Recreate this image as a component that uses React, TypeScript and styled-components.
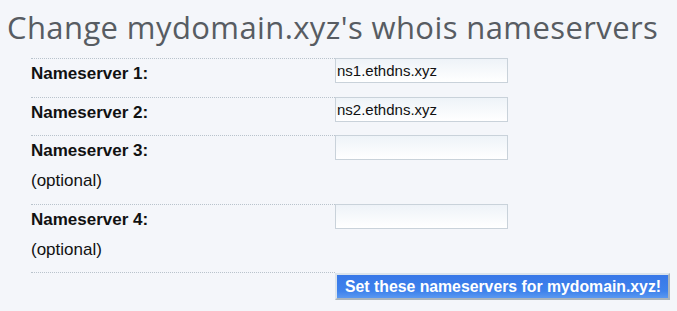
import React from "react";
import styled, { createGlobalStyle } from "styled-components";

const Global = createGlobalStyle`
  html, body { margin: 0; padding: 0; background: #f4f6fa; }
  body { font-family: "Liberation Sans", Arial, sans-serif; color: #111; }
`;

const Page = styled.div`
  padding: 8px 0 0 7px;
  width: 677px;
  height: 311px;
  box-sizing: border-box;
  overflow: hidden;
`;

const Title = styled.h1`
  margin: 0;
  font-family: "Open Sans", sans-serif;
  font-weight: 400;
  font-size: 31px;
  line-height: 38px;
  letter-spacing: 0.4px;
  color: #575c62;
  white-space: nowrap;
`;

const Form = styled.form`
  margin: 12px 0 0 24px;
  display: flex;
  flex-direction: column;
`;

const Row = styled.div`
  display: flex;
  align-items: flex-start;
`;

const Label = styled.div`
  width: 304px;
  border-top: 1px dotted #b9c3cc;
  padding: 0 0 7.5px;
  font-size: 17px;
  line-height: 30px;
  box-sizing: border-box;
`;

const Strong = styled.div`
  font-weight: 700;
`;

const Note = styled.div`
  font-weight: 400;
`;

const Input = styled.input`
  width: 173px;
  height: 25px;
  box-sizing: border-box;
  border: 1px solid #c9d2da;
  background: linear-gradient(#eef3f8, #ffffff);
  font-family: "Liberation Sans", Arial, sans-serif;
  font-size: 15px;
  color: #111;
  padding: 0 0 0 1px;
  margin: 0;
  outline: none;
`;

const Spacer = styled.div`
  width: 304px;
  border-top: 1px dotted #b9c3cc;
  height: 1px;
`;

const Submit = styled.button`
  margin-top: 1px;
  height: 27px;
  padding: 0 7px 0 8px;
  border: 2px solid;
  border-color: #dbe4ec #aab5bd #aab5bd #dbe4ec;
  background: linear-gradient(#3878e8, #3e82ec 70%, #5a98f0);
  color: #fff;
  font-family: "Liberation Sans", Arial, sans-serif;
  font-weight: 700;
  font-size: 15.8px;
  white-space: nowrap;
  cursor: pointer;
`;

const servers = [
  { n: 1, value: "ns1.ethdns.xyz", optional: false },
  { n: 2, value: "ns2.ethdns.xyz", optional: false },
  { n: 3, value: "", optional: true },
  { n: 4, value: "", optional: true },
];

export default function App() {
  return (
    <Page>
      <Global />
      <Title>Change mydomain.xyz's whois nameservers</Title>
      <Form onSubmit={(e) => e.preventDefault()}>
        {servers.map((s) => (
          <Row key={s.n}>
            <Label>
              <Strong>Nameserver {s.n}:</Strong>
              {s.optional && <Note>(optional)</Note>}
            </Label>
            <Input defaultValue={s.value} />
          </Row>
        ))}
        <Row>
          <Spacer />
          <Submit type="submit">Set these nameservers for mydomain.xyz!</Submit>
        </Row>
      </Form>
    </Page>
  );
}
